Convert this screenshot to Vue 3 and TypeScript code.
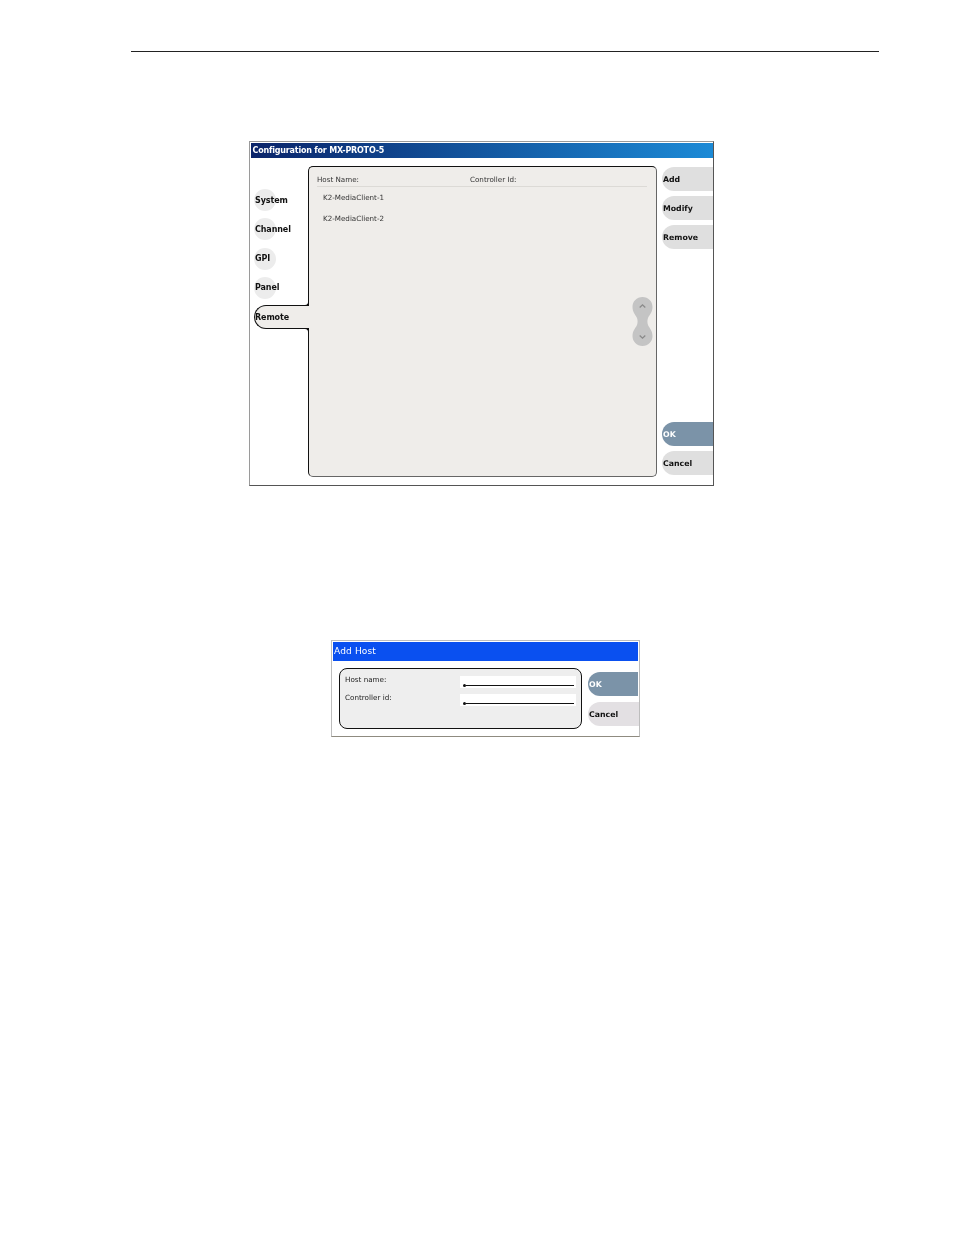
<script setup lang="ts">
const tabs = ['System', 'Channel', 'GPI', 'Panel', 'Remote']
const hosts = ['K2-MediaClient-1', 'K2-MediaClient-2']
const topActions = ['Add', 'Modify', 'Remove']
</script>

<template>
  <div class="page">
    <div class="rule"></div>

    <section class="dialog config">
      <header class="title config-title">Configuration for MX-PROTO-5</header>
      <div class="config-body">
        <nav class="tabs">
          <div v-for="t in tabs" :key="t" class="tab" :class="{ active: t === 'Remote' }">
            <span class="tab-label">{{ t }}</span>
          </div>
        </nav>
        <main class="panel">
          <div class="table-head">
            <span class="col-host">Host Name:</span>
            <span>Controller Id:</span>
          </div>
          <div class="row" v-for="h in hosts" :key="h">{{ h }}</div>
          <svg class="scroller" width="21" height="49" viewBox="0 0 21 49">
            <path d="M10.5 0C16.3 0 20.5 4.4 20.5 10C20.5 15 17.5 18 16 21C15.2 23 15.2 26 16 28C17.5 31 20.5 34 20.5 39C20.5 44.6 16.3 49 10.5 49C4.7 49 .5 44.6 .5 39C.5 34 3.5 31 5 28C5.8 26 5.8 23 5 21C3.5 18 .5 15 .5 10C.5 4.4 4.7 0 10.5 0Z" fill="#c4c4c4"/>
            <path d="M7.7 10.5L10.5 7.8L13.3 10.5" fill="none" stroke="#8a8a8a" stroke-width="1.3"/>
            <path d="M7.7 38.5L10.5 41.2L13.3 38.5" fill="none" stroke="#8a8a8a" stroke-width="1.3"/>
          </svg>
        </main>
        <aside class="actions">
          <div class="action-group">
            <div v-for="a in topActions" :key="a" class="btn">{{ a }}</div>
          </div>
          <div class="action-group">
            <div class="btn primary">OK</div>
            <div class="btn">Cancel</div>
          </div>
        </aside>
      </div>
    </section>

    <section class="dialog host">
      <header class="title host-title">Add Host</header>
      <div class="host-body">
        <div class="host-panel">
          <div class="labels">
            <span>Host name:</span>
            <span>Controller id:</span>
          </div>
          <div class="inputs">
            <div class="input"><i class="dot"></i><i class="line"></i></div>
            <div class="input"><i class="dot"></i><i class="line"></i></div>
          </div>
        </div>
        <div class="host-actions">
          <div class="btn primary">OK</div>
          <div class="btn cancel">Cancel</div>
        </div>
      </div>
    </section>
  </div>
</template>

<style>
html, body { margin: 0; background: #fff; }
</style>

<style scoped>
.page {
  width: 954px;
  height: 1235px;
  box-sizing: border-box;
  padding: 51px 75px 0 131px;
  font-family: "DejaVu Sans", sans-serif;
  color: #111;
  overflow: hidden;
  display: flex;
  flex-direction: column;
}
.rule { height: 1px; background: #222; flex: none; }
.dialog { box-sizing: border-box; background: #fff; flex: none; }
.title { color: #fff; box-sizing: border-box; white-space: nowrap; filter: blur(0.3px); }

.config {
  width: 465px;
  height: 345px;
  margin: 89px 0 0 118px;
  border: 1px solid #9a9a9a;
  border-right-color: #555;
  border-bottom-color: #555;
  padding: 1px 0 0 1px;
  display: flex;
  flex-direction: column;
}
.config-title {
  height: 15px;
  line-height: 15px;
  padding-left: 1.5px;
  font-size: 8px;
  font-weight: 700;
  letter-spacing: -0.2px;
  background: linear-gradient(90deg, #0a246a, #1c8ad6);
}
.config-body { flex: 1; display: flex; padding-top: 8px; padding-bottom: 8px; min-height: 0; }

.tabs {
  width: 57px;
  flex: none;
  padding: 23px 0 0 3px;
  box-sizing: border-box;
  display: flex;
  flex-direction: column;
  gap: 7.3px;
  position: relative;
  z-index: 1;
}
.tab {
  width: 22px;
  height: 22px;
  border-radius: 50%;
  background: #ececec;
  display: flex;
  align-items: center;
  font-size: 8px;
  font-weight: 700;
  letter-spacing: -0.1px;
  white-space: nowrap;
  filter: blur(0.25px);
}
.tab-label { padding-left: 1px; }
.tab.active {
  position: relative;
  width: 55px;
  height: 24px;
  margin-top: -1px;
  box-sizing: border-box;
  border: 1px solid #111;
  border-right: 0;
  border-radius: 12px 0 0 12px;
  background: #efedea;
  margin-right: -1px;
  filter: none;
}
.tab.active .tab-label { padding-left: 0; filter: blur(0.25px); }
.tab.active::before,
.tab.active::after {
  content: "";
  position: absolute;
  right: 0;
  width: 5px;
  height: 5px;
  box-sizing: border-box;
  border-right: 1px solid #111;
}
.tab.active::before {
  top: -5px;
  border-bottom: 1px solid #111;
  border-bottom-right-radius: 4px;
}
.tab.active::after {
  bottom: -5px;
  border-top: 1px solid #111;
  border-top-right-radius: 4px;
}

.panel {
  position: relative;
  width: 349px;
  flex: none;
  box-sizing: border-box;
  background: #efedea;
  border: 1px solid #111;
  border-right-color: #666;
  border-bottom-color: #666;
  border-radius: 5px;
  padding: 8px 9px 0 8px;
  font-size: 7.15px;
  color: #333;
}
.table-head {
  display: flex;
  height: 11px;
  line-height: 10px;
  border-bottom: 1px solid #dcdad6;
  filter: blur(0.25px);
}
.col-host { width: 153px; }
.row {
  height: 21px;
  line-height: 21px;
  padding-left: 6px;
  filter: blur(0.25px);
}
.row:first-of-type { margin-top: 4px; }
.scroller { position: absolute; left: 323px; top: 130px; }

.actions {
  flex: 1;
  padding: 1px 0 2px 5px;
  display: flex;
  flex-direction: column;
  justify-content: space-between;
  min-width: 0;
}
.action-group { display: flex; flex-direction: column; gap: 5px; }
.btn {
  height: 24px;
  line-height: 26px;
  border-radius: 12px 0 0 12px;
  background: #dfdfdf;
  font-size: 7.8px;
  font-weight: 700;
  padding-left: 1px;
  color: #111;
  filter: blur(0.25px);
}
.btn.primary { background: #7b93a8; color: #fff; }

.host {
  width: 309px;
  height: 97px;
  margin: 154px 0 0 200px;
  border: 1px solid #bdbdbd;
  border-bottom-color: #8f8b80;
  padding: 1px 1px 0 1px;
  display: flex;
  flex-direction: column;
}
.host-title {
  height: 19px;
  line-height: 18px;
  flex: none;
  padding-left: 1px;
  background: #0a50f0;
  font-size: 9px;
  letter-spacing: 0.15px;
}
.host-body { display: flex; padding: 7px 0 0 6px; }
.host-panel {
  width: 243px;
  height: 61px;
  box-sizing: border-box;
  background: #eeeeee;
  border: 1px solid #111;
  border-radius: 8px;
  display: flex;
  padding: 6px 5px 0 5px;
  justify-content: space-between;
  font-size: 7.2px;
  color: #222;
}
.labels { display: flex; flex-direction: column; gap: 8px; line-height: 10px; filter: blur(0.25px); }
.inputs { display: flex; flex-direction: column; gap: 6px; margin-top: 1px; }
.input {
  width: 116px;
  height: 12px;
  background: #fff;
  display: flex;
  align-items: center;
  padding: 6px 2px 0 3px;
  box-sizing: border-box;
}
.dot { width: 3px; height: 3px; border-radius: 50%; background: #111; flex: none; }
.line { height: 1px; flex: 1; background: #111; }
.host-actions {
  flex: 1;
  padding: 4px 0 0 6px;
  display: flex;
  flex-direction: column;
  gap: 6px;
}
.btn.cancel { background: #e3e0e3; margin-right: -1px; }
</style>
